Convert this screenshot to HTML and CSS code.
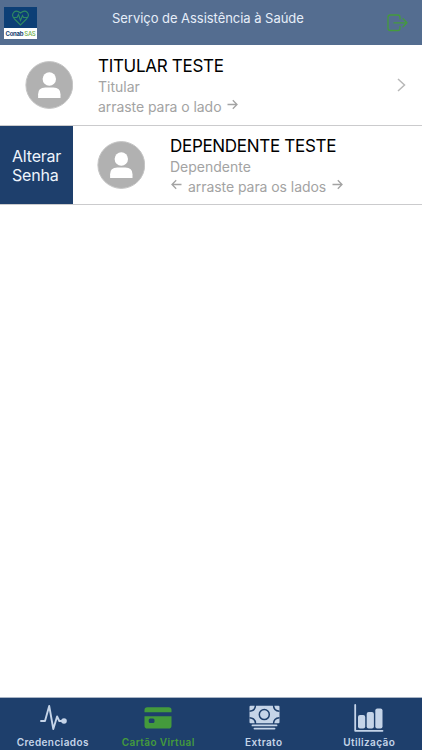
FILE: index.html
```html
<!DOCTYPE html>
<html lang="pt-BR">
  <head>
    <meta charset="utf-8">
    <title>Serviço de Assistência à Saúde</title>
    <link rel="stylesheet" href="styles.css">
  </head>
  <body>
    <div class="app">
      <header class="header">
        <div class="logo">
          <svg class="logo-heart" viewBox="0 0 33 21" fill="none" stroke="#2f8a62" stroke-width="1.1">
            <path d="M16.5 18 L10.5 12 C6 7 11 1.5 16.5 6 C22 1.5 27 7 22.5 12 Z" />
            <path d="M9 10.5 H13 L14.5 7.5 L16.5 13.5 L18.5 8.5 L19.5 10.5 H24" />
          </svg>
          <div class="logo-text">Conab <span>SAS</span></div>
        </div>
        <h1 class="title">Serviço de Assistência à Saúde</h1>
        <svg class="logout" viewBox="0 0 22 18" fill="none" stroke="#449b3c" stroke-width="1.3" stroke-linecap="round" stroke-linejoin="round">
          <path d="M13 5 V3.2 Q13 1 10.8 1 H3.2 Q1 1 1 3.2 V14.3 Q1 16.5 3.2 16.5 H10.8 Q13 16.5 13 14.3 V12.5" />
          <path d="M7 8.8 H20 M16 4.8 L20 8.8 L16 12.8" />
        </svg>
      </header>

      <main class="list">
        <div class="row">
          <svg class="avatar" viewBox="0 0 48 48">
            <circle cx="24.3" cy="24" r="23.4" fill="#b1b1b1" stroke="#c4c4c4" />
            <circle cx="24.3" cy="18" r="6.7" fill="#fff" />
            <path d="M13.1 37 V33.2 Q13.1 26.5 20.3 26.5 H28.3 Q35.5 26.5 35.5 33.2 V37 Z" fill="#fff" />
          </svg>
          <div class="info">
            <div class="name">TITULAR TESTE</div>
            <div class="role">Titular</div>
            <div class="hint">
              <span>arraste para o lado</span>
              <svg class="arrow" viewBox="0 0 11 11"><path d="M0.5 5.5 H10 M5.8 1.3 L10 5.5 L5.8 9.7" /></svg>
            </div>
          </div>
          <svg class="chevron" viewBox="0 0 9 14"><path d="M1 1 L7.5 7 L1 13" /></svg>
        </div>

        <div class="row row-open">
          <button class="action">Alterar<br>Senha</button>
          <svg class="avatar" viewBox="0 0 48 48">
            <circle cx="24.3" cy="24" r="23.4" fill="#b1b1b1" stroke="#c4c4c4" />
            <circle cx="24.3" cy="18" r="6.7" fill="#fff" />
            <path d="M13.1 37 V33.2 Q13.1 26.5 20.3 26.5 H28.3 Q35.5 26.5 35.5 33.2 V37 Z" fill="#fff" />
          </svg>
          <div class="info">
            <div class="name">DEPENDENTE TESTE</div>
            <div class="role">Dependente</div>
            <div class="hint">
              <svg class="arrow arrow-left" viewBox="0 0 11 11"><path d="M10.5 5.5 H1 M5.2 1.3 L1 5.5 L5.2 9.7" /></svg>
              <span>arraste para os lados</span>
              <svg class="arrow" viewBox="0 0 11 11"><path d="M0.5 5.5 H10 M5.8 1.3 L10 5.5 L5.8 9.7" /></svg>
            </div>
          </div>
        </div>
      </main>

      <nav class="tabs">
        <a class="tab">
          <svg class="icon" viewBox="0 0 32 28">
            <path d="M4 17 H8 L12.2 2 L16.3 25 L20.1 12.5 L22.3 17 H26" fill="none" stroke="currentColor" stroke-width="1.9" stroke-linejoin="round" stroke-linecap="round" />
            <circle cx="27" cy="17" r="2.8" fill="currentColor" />
          </svg>
          <span>Credenciados</span>
        </a>
        <a class="tab active">
          <svg class="icon" viewBox="0 0 32 28" fill="currentColor">
            <path d="M2.5 8.3 V6 Q2.5 3.2 5.3 3.2 H26.7 Q29.5 3.2 29.5 6 V8.3 Z" />
            <path fill-rule="evenodd" d="M2.5 12.3 H29.5 V21.7 Q29.5 24.5 26.7 24.5 H5.3 Q2.5 24.5 2.5 21.7 Z M8.2 14.6 Q6.7 14.6 6.7 16.1 V17.5 Q6.7 19 8.2 19 H11 Q12.5 19 12.5 17.5 V16.1 Q12.5 14.6 11 14.6 Z" />
          </svg>
          <span>Cartão Virtual</span>
        </a>
        <a class="tab">
          <svg class="icon" viewBox="0 0 32 28">
            <rect x="1.5" y="1.7" width="30" height="17.5" rx="1" fill="currentColor" />
            <g fill="none" stroke="#1e3f6c" stroke-width="1.5">
              <circle cx="16.3" cy="10.6" r="5" />
              <path d="M7.5 1 Q7.5 7 1.5 7.3 M25.5 1 Q25.5 7 31.5 7.3 M7.5 20 Q7.5 14 1.5 13.7 M25.5 20 Q25.5 14 31.5 13.7" />
            </g>
            <path d="M4.5 21.4 H28.5 M6.5 24.6 H26.5" stroke="currentColor" stroke-width="1.9" stroke-linecap="round" />
          </svg>
          <span>Extrato</span>
        </a>
        <a class="tab">
          <svg class="icon" viewBox="0 0 32 28" fill="currentColor">
            <path d="M2.2 1 V26.8 H29.5" fill="none" stroke="currentColor" stroke-width="1.8" stroke-linecap="round" stroke-linejoin="round" />
            <rect x="5" y="11" width="7.2" height="13.5" rx="2" />
            <rect x="13.7" y="8" width="7.2" height="16.5" rx="2" />
            <rect x="22.3" y="4.4" width="7.2" height="20.1" rx="2" />
          </svg>
          <span>Utilização</span>
        </a>
      </nav>
    </div>
  </body>
</html>
```
FILE: styles.css
```css
body {
  margin: 0;
  background-color: #fff;
  font-family: Inter, "Liberation Sans", sans-serif;
}

.app {
  display: flex;
  flex-direction: column;
  height: 750px;
}

/* Top bar */
.header {
  display: grid;
  grid-template-columns: 112px 1fr 108px;
  box-sizing: border-box;
  height: 45px;
  background-color: #546d90;
}
.logo {
  width: 33px;
  height: 32px;
  margin: 7px 0 0 4px;
  background-color: #0d3f76;
}
.logo-heart {
  display: block;
  width: 33px;
  height: 21px;
}
.logo-text {
  height: 11px;
  background-color: #fff;
  color: #173f72;
  font-size: 6px;
  font-weight: 700;
  line-height: 11px;
  letter-spacing: -0.3px;
  text-align: center;
  white-space: nowrap;
}
.logo-text span {
  color: #6cae4b;
  font-weight: 500;
}
.title {
  margin: 10px 0 0;
  color: #e6eef9;
  font-size: 13px;
  font-weight: 400;
  line-height: 17px;
  letter-spacing: -0.04px;
  white-space: nowrap;
}
.logout {
  justify-self: end;
  width: 22px;
  height: 18px;
  margin: 14px 13px 0 0;
}

/* People list */
.list {
  flex: 1;
}
.row {
  display: flex;
  align-items: center;
  box-sizing: border-box;
  height: 81px;
  padding-left: 25px;
  border-bottom: 1px solid #cbcbcd;
}
.row-open {
  height: 79px;
  padding-left: 0;
}
.action {
  align-self: stretch;
  width: 73px;
  margin: 0 24px 0 0;
  padding: 2px 0 0 12px;
  border: none;
  background-color: #1e3f6c;
  color: #eef4fc;
  font-family: inherit;
  font-size: 16px;
  line-height: 19px;
  letter-spacing: -0.2px;
  text-align: left;
}
.avatar {
  flex: none;
  width: 48px;
  height: 48px;
}
.info {
  flex: 1;
  margin-left: 25px;
  color: #a3a3a3;
  font-size: 14px;
  white-space: nowrap;
}
.name {
  color: #000;
  font-size: 17px;
  line-height: 22px;
  letter-spacing: -0.3px;
}
.role {
  line-height: 20px;
}
.hint {
  display: flex;
  align-items: center;
  gap: 6px;
  line-height: 19px;
  letter-spacing: -0.06px;
}
.arrow {
  width: 11px;
  height: 11px;
  margin-top: -4px;
  fill: none;
  stroke: #a3a3a3;
  stroke-width: 1.3;
}
.arrow-left {
  margin-left: 1px;
}
.chevron {
  width: 9px;
  height: 14px;
  margin-right: 16px;
  fill: none;
  stroke: #b8b8b8;
  stroke-width: 1.5;
}

/* Bottom tabs */
.tabs {
  display: grid;
  grid-template-columns: repeat(4, 1fr);
  box-sizing: border-box;
  height: 53px;
  border-top: 1px solid #a9b5c6;
  background-color: #1e3f6c;
}
.tab {
  display: flex;
  flex-direction: column;
  align-items: center;
  padding-top: 6px;
  color: #c5d4e8;
  font-size: 10px;
  font-weight: 600;
  line-height: 12px;
  letter-spacing: 0.4px;
}
.tab span {
  margin-top: 4px;
}
.active {
  color: #449b3c;
}
.icon {
  width: 32px;
  height: 28px;
}
```
